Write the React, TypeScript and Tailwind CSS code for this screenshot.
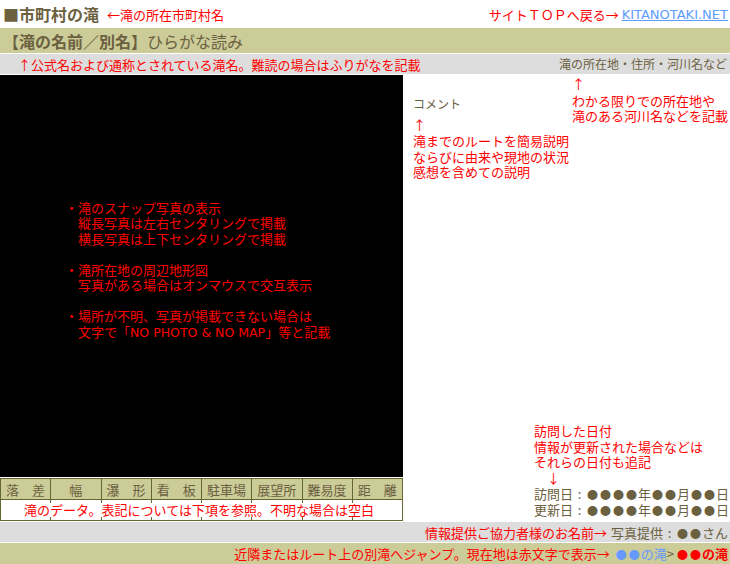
import React from "react";

const JP = { fontFamily: '"Noto Sans CJK JP", "Noto Sans", sans-serif' };
const LAT = { fontFamily: '"DejaVu Sans", "Noto Sans CJK JP", sans-serif' };

const heads = ["落　差", "幅", "瀑　形", "看　板", "駐車場", "展望所", "難易度", "距　離"];

const Dots = ({ n }: { n: number }) => (
  <>
    {Array.from({ length: n }).map((_, i) => (
      <span key={i} className="inline-block w-[13px] text-center text-[11px]">
        ●
      </span>
    ))}
  </>
);

const Colon = () => <span className="inline-block w-[13px] text-center">:</span>;

export default function App() {
  return (
    <div className="w-[730px] h-[564px] bg-white overflow-hidden text-[#6b6040]" style={JP}>
      {/* header line */}
      <div className="h-[28px] flex items-center justify-between pl-[3px] pr-[2px]">
        <div className="flex items-center">
          <span className="text-[16px] font-bold leading-none">■市町村の滝</span>
          <span className="text-[13px] text-[#ff0000] ml-[8px] leading-none">←滝の所在市町村名</span>
        </div>
        <div className="flex items-center text-[13px] leading-none">
          <span className="text-[#ff0000]">サイトＴＯＰへ戻る→</span>
          <span className="ml-[3px] text-[#5c9cff] underline" style={LAT}>KITANOTAKI.NET</span>
        </div>
      </div>
      {/* name bar */}
      <div className="h-[25px] bg-[#cccc99] flex items-center pl-[3px] text-[16px] leading-none">
        <span className="font-bold">【滝の名前／別名】</span>
        <span>ひらがな読み</span>
      </div>
      <div className="h-[1px]" />
      <div className="h-[20px] bg-[#dddddd] flex items-center justify-between pl-[18px] pr-[3px] leading-none">
        <span className="text-[13px] text-[#ff0000]">↑公式名および通称とされている滝名。難読の場合はふりがなを記載</span>
        <span className="text-[12px]">滝の所在地・住所・河川名など</span>
      </div>
      <div className="h-[1px]" />
      {/* main */}
      <div className="flex h-[446px]">
        <div className="w-[403px] flex flex-col">
          <div className="h-[402px] bg-black flex flex-col justify-center pl-[65px] pb-[12px] text-[13px] leading-[15.5px] text-[#ff0000]">
            <div>・滝のスナップ写真の表示</div>
            <div>{"　縦長写真は左右センタリングで掲載"}</div>
            <div>{"　横長写真は上下センタリングで掲載"}</div>
            <div>&nbsp;</div>
            <div>・滝所在地の周辺地形図</div>
            <div>{"　写真がある場合はオンマウスで交互表示"}</div>
            <div>&nbsp;</div>
            <div>・場所が不明、写真が掲載できない場合は</div>
            <div>
              {"　文字で「"}
              <span style={LAT} className="text-[12.5px]">NO PHOTO &amp; NO MAP</span>
              {"」等と記載"}
            </div>
          </div>
          <div className="h-[1px]" />
          <table className="w-[403px] border-collapse border border-[#666633] table-fixed">
            <tbody>
              <tr className="h-[21px] bg-[#cccc99]">
                {heads.map((h, i) => (
                  <td
                    key={i}
                    className="border border-[#666633] text-[13px] leading-none text-center p-0"
                  >
                    {h}
                  </td>
                ))}
              </tr>
              <tr className="h-[21px]">
                {heads.map((_, i) => (
                  <td key={i} className="border border-[#666633] p-0" />
                ))}
              </tr>
            </tbody>
          </table>
          <div className="relative h-0">
            <div className="absolute left-[24px] bottom-[4px] h-[14px] bg-white text-[13px] leading-[14px] text-[#ff0000] whitespace-nowrap">
              滝のデータ。表記については下項を参照。不明な場合は空白
            </div>
          </div>
        </div>
        {/* right column */}
        <div className="flex-1 flex flex-col justify-between">
          <div className="flex pl-[10px]">
            <div className="w-[159px] pt-[21px]">
              <div className="text-[12px] leading-[15.5px]">コメント</div>
              <div className="mt-[5px] text-[13px] leading-[15.5px] text-[#ff0000]">
                <div>↑</div>
                <div className="mt-[1px]">滝までのルートを簡易説明</div>
                <div>ならびに由来や現地の状況</div>
                <div>感想を含めての説明</div>
              </div>
            </div>
            <div className="pt-[1px] text-[13px] leading-[15.5px] text-[#ff0000]">
              <div>↑</div>
              <div className="mt-[1px]">わかる限りでの所在地や</div>
              <div>滝のある河川名などを記載</div>
            </div>
          </div>
          <div className="ml-auto mr-[1px] w-[195px] pb-[3px]">
            <div className="text-[13px] leading-[15.5px] text-[#ff0000]">
              <div>訪問した日付</div>
              <div>情報が更新された場合などは</div>
              <div>それらの日付も追記</div>
              <div className="pl-[13px]">↓</div>
            </div>
            <div className="mt-[1px] text-[13px] leading-[16px] whitespace-nowrap text-right">
              <div>
                訪問日<Colon /><Dots n={4} />年<Dots n={2} />月<Dots n={2} />日
              </div>
              <div>
                更新日<Colon /><Dots n={4} />年<Dots n={2} />月<Dots n={2} />日
              </div>
            </div>
          </div>
        </div>
      </div>
      <div className="h-[1px]" />
      <div className="h-[20px] bg-[#dddddd] flex items-center justify-end pr-[2px] leading-none">
        <span className="text-[13px] text-[#ff0000]">情報提供ご協力者様のお名前→</span>
        <span className="text-[13px] ml-[4px]">
          写真提供<Colon /><Dots n={2} />さん
        </span>
      </div>
      <div className="h-[1px]" />
      <div className="h-[21px] bg-[#cccc99] flex items-center justify-end pr-[2px] leading-none text-[13px]">
        <span className="text-[#ff0000]">近隣またはルート上の別滝へジャンプ。現在地は赤文字で表示→</span>
        <span className="ml-[5px] text-[#6699ff]">
          <Dots n={2} />の滝
        </span>
        <span>&gt;</span>
        <span className="text-[#ff0000] font-bold ml-[2px]">
          <Dots n={2} />の滝
        </span>
      </div>
    </div>
  );
}
